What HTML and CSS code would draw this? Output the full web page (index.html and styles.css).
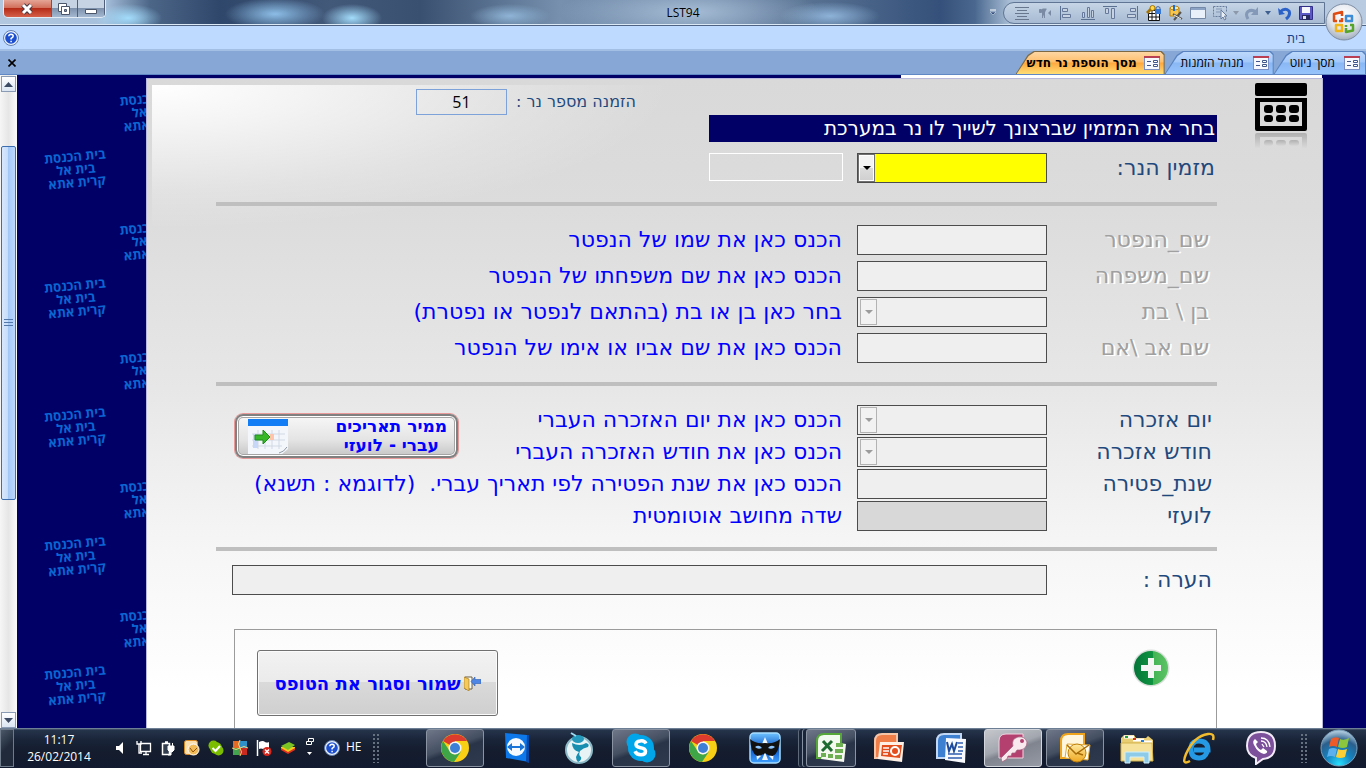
FILE: index.html
```html
<!DOCTYPE html>
<html lang="he" dir="rtl">
<head>
<meta charset="utf-8">
<title>LST94</title>
<link rel="stylesheet" href="styles.css">
</head>
<body>
<svg class="defs" width="0" height="0" aria-hidden="true">
  <defs>
    <linearGradient id="gold" x1="0" y1="0" x2="0" y2="1"><stop offset="0" stop-color="#ffe9a0"/><stop offset="1" stop-color="#eea820"/></linearGradient>
    <linearGradient id="blue" x1="0" y1="0" x2="0" y2="1"><stop offset="0" stop-color="#6fc4ff"/><stop offset=".5" stop-color="#0a52c4"/><stop offset="1" stop-color="#3ea0ff"/></linearGradient>
    <linearGradient id="green" x1="0" y1="0" x2="1" y2="0"><stop offset="0" stop-color="#05753a"/><stop offset=".55" stop-color="#0f9440"/><stop offset=".56" stop-color="#44b354"/><stop offset="1" stop-color="#5cc465"/></linearGradient>
    <radialGradient id="orb" cx=".5" cy=".95" r=".9"><stop offset="0" stop-color="#28e0ff"/><stop offset=".4" stop-color="#1583c0"/><stop offset=".75" stop-color="#2b5f8c"/><stop offset="1" stop-color="#a8c4d8"/></radialGradient>
    <radialGradient id="pearl" cx=".5" cy=".3" r=".7"><stop offset="0" stop-color="#fff"/><stop offset=".6" stop-color="#dfe4ec"/><stop offset="1" stop-color="#a3aebd"/></radialGradient>
    <linearGradient id="fade" x1="0" y1="0" x2="0" y2="1"><stop offset="0" stop-color="#b0b0b0"/><stop offset="1" stop-color="#d9d9d9"/></linearGradient>
    <symbol id="chrome" viewBox="0 0 28 28">
      <circle cx="14" cy="14" r="14" fill="#f9cf16"/>
      <path d="M14 14 2 7A14 14 0 0 1 26.100 7L14 7Z" fill="#dc3b2e"/>
      <path d="M2 7A14 14 0 0 0 13 28L20 17.500 14 20.500Q9.500 20 8 16Z" fill="#3fa648"/>
      <circle cx="14" cy="14" r="6.500" fill="#f4f6f8"/><circle cx="14" cy="14" r="5" fill="#3d7fd6"/>
    </symbol>
    <symbol id="formicon" viewBox="0 0 16 14">
      <rect x=".5" y=".5" width="15" height="13" fill="#f6f8fd" stroke="#7a8fc4"/><path d="M0 0h16v2H0z" fill="#b93f55"/>
      <path d="M3 5.500h4M3 9.500h4" stroke="#41568c"/><path d="M9.500 4.500h4v2h-4zM9.500 8.500h4v2h-4z" fill="#fff" stroke="#41568c"/>
    </symbol>
    <symbol id="help" viewBox="0 0 16 16">
      <circle cx="8" cy="8" r="7.500" fill="#e9f1fc" stroke="#6580ae"/><circle cx="8" cy="8" r="5.800" fill="#1c4fcf"/>
      <path d="M5.800 6.300Q6 4.200 8.100 4.200q2.100.1 2.100 1.900Q10.200 7.400 8.100 8.400v1M8.100 10.700v1.500" fill="none" stroke="#fff" stroke-width="1.500"/>
    </symbol>
  </defs>
</svg>

<header class="titlebar" dir="ltr">
  <div class="winbtns">
    <button class="win close" aria-label="סגור"><svg width="14" height="12" viewBox="0 0 14 12"><path d="M3 2l8 8M11 2l-8 8" stroke="#4a3940" stroke-width="5"/><path d="M3 2l8 8M11 2l-8 8" stroke="#fff" stroke-width="3"/></svg></button>
    <button class="win" aria-label="שחזר"><svg width="14" height="13" viewBox="0 0 14 13"><path d="M1.500 1.500h8v8h-8z" fill="#fff" stroke="#4c566a"/><path d="M4.500 4.500h8v8h-8z" fill="#fff" stroke="#4c566a"/><path d="M7.500 7.500h2v2h-2z" fill="#8d9db5" stroke="#4c566a"/></svg></button>
    <button class="win" aria-label="מזער"><svg width="14" height="12" viewBox="0 0 14 12"><path d="M1.500 6.500h11v4h-11z" fill="#fff" stroke="#4c566a"/></svg></button>
  </div>
  <h1 class="apptitle">LST94</h1>
  <div class="quick">
    <svg class="more" width="8" height="8" viewBox="0 0 8 8"><path d="M1 1h6" stroke="#fff"/><path d="M1 3h6L4 6z" fill="#35507c" stroke="#e6eef8" stroke-width=".5"/></svg>
    <div class="pill">
      <svg width="16" height="16" viewBox="0 0 16 16"><path d="M1 2.500h14M3 5.500h10M1 8.500h14M3 11.500h10M1 14.500h14" stroke="#68768e"/></svg>
      <svg width="16" height="16" viewBox="0 0 16 16"><path d="M8.500 4v9M6.500 13V4h4M3.500 4.500h2v3h-2z" stroke="#7a8aa3" fill="#7a8aa3"/><path d="M15 5v6l-3-3z" fill="#7a8aa3"/></svg>
      <svg width="16" height="16" viewBox="0 0 16 16"><path d="M2.500 1v14" stroke="#5b7191"/><path d="M4.500 3.500h5v3h-5zM4.500 9.500h8v3h-8z" fill="#c7d3e3" stroke="#66799a"/></svg>
      <svg width="16" height="16" viewBox="0 0 16 16"><path d="M1 14.500h14" stroke="#5b7191"/><path d="M2.500 7.500h2v5h-2zM7.500 2.500h2v10h-2zM11.500 5.500h2v7h-2z" fill="#c7d3e3" stroke="#66799a"/></svg>
      <svg width="16" height="16" viewBox="0 0 16 16"><path d="M1 1.500h14" stroke="#5b7191"/><path d="M3.500 3.500h3v5h-3zM9.500 3.500h3v10h-3z" fill="#c7d3e3" stroke="#66799a"/></svg>
      <svg width="16" height="16" viewBox="0 0 16 16"><path d="M13.500 1v14" stroke="#5b7191"/><path d="M6.500 3.500h5v3h-5zM3.500 9.500h8v3h-8z" fill="#c7d3e3" stroke="#66799a"/></svg>
      <svg width="16" height="16" viewBox="0 0 16 16"><path d="M2.500 5.500h11v10h-11z" fill="#fff" stroke="#111"/><path d="M2 8.500h12M2 12h12M6 5v10M10 5v10" stroke="#111"/><path d="M10 4V2.500q2-2 4 0V4" fill="none" stroke="#4466a0"/><path d="M9 4h6v5H9z" fill="#3778d4"/><path d="M1 8l5-5" stroke="#a37508" stroke-width="3"/><circle cx="6.500" cy="3" r="2.500" fill="#ffd94a" stroke="#a37508"/></svg>
      <svg width="16" height="16" viewBox="0 0 16 16"><path d="M2 3h9v8H2z" fill="#f6c650" stroke="#b98112"/><ellipse cx="6.500" cy="3" rx="4.500" ry="2" fill="#ffe99b" stroke="#b98112"/><path d="M6 0v6" stroke="#1e6ed0" stroke-width="2"/><path d="M5 9l9 5M13 7l-7 8" stroke="#555" stroke-width="2"/><path d="M6 10l7 4" stroke="#f0f0f0"/></svg>
      <svg width="16" height="16" viewBox="0 0 16 16"><path d="M.5 2.500h15v11H.5z" fill="#e9f0f9" stroke="#7488a7"/><path d="M1 3h14v2H1z" fill="#8ba2c5"/></svg>
      <svg width="16" height="16" viewBox="0 0 16 16"><path d="M1.500 1.500h13M1.500 1.500v10h7M14.500 1.500v5" fill="none" stroke="#687c9c" stroke-dasharray="2 1"/><path d="M4 4h6M4 7h4" stroke="#8397b4"/><path d="M9 5v9l2-2 1.500 3 1.500-1-1.500-3H15z" fill="#e9eef5" stroke="#687c9c"/></svg>
      <svg class="tiny" width="6" height="4" viewBox="0 0 6 4"><path d="M0 0h6L3 4z" fill="#8d99aa"/></svg>
      <svg width="16" height="16" viewBox="0 0 16 16"><path d="M4 14Q1 9 4 6.500 8 4 12 7" fill="none" stroke="#8499b7" stroke-width="3"/><path d="M14 2v8H7z" fill="#8499b7"/></svg>
      <svg class="tiny" width="6" height="4" viewBox="0 0 6 4"><path d="M0 0h6L3 4z" fill="#3f5f91"/></svg>
      <svg width="16" height="16" viewBox="0 0 16 16"><path d="M10 14Q15 10 13 6 9 2 4 7" fill="none" stroke="#2c62c8" stroke-width="3"/><path d="M2 3l1 7 6-1z" fill="#2c62c8"/></svg>
      <svg width="16" height="16" viewBox="0 0 16 16"><path d="M1.500 1.500h13v13h-13z" fill="#5c58c4" stroke="#302e85"/><path d="M4 2h8v6H4z" fill="#f5f7fc"/><path d="M4 10h8v5H4z" fill="#292a5e"/><path d="M5 11h3v3H5z" fill="#dfe4f0"/></svg>
    </div>
    <button class="office" aria-label="Office"><svg width="38" height="38" viewBox="0 0 38 38"><circle cx="19" cy="19" r="18" fill="url(#pearl)" stroke="#7d8da4"/><g fill="none" stroke-width="2.500" stroke-linejoin="round"><path d="M17 13V9l-8 2v7h3M17 15v3h-3" stroke="#df4b13"/><path d="M21 13h6v5h-6z" stroke="#3c8cd8"/><path d="M17 22h-6v6h6z" stroke="#f0b416"/><path d="M21 25v4l7-1.500V22h-3M21 22v2" stroke="#57a42a"/></g></svg></button>
  </div>
</header>

<nav class="ribbon"><a class="home" href="#">בית</a><button class="plain" aria-label="עזרה"><svg width="16" height="16"><use href="#help"/></svg></button></nav>

<nav class="tabs">
  <button class="tab first"><svg width="16" height="14"><use href="#formicon"/></svg><span>מסך ניווט</span></button>
  <button class="tab"><svg width="16" height="14"><use href="#formicon"/></svg><span>מנהל הזמנות</span></button>
  <button class="tab active"><svg width="16" height="14"><use href="#formicon"/></svg><span>מסך הוספת נר חדש</span></button>
  <button class="plain closetab" aria-label="סגור כרטיסיה"><svg width="8" height="8" viewBox="0 0 8 8"><path d="M.5.500l7 7M7.500.500l-7 7" stroke="#000" stroke-width="1.600"/></svg></button>
</nav>

<div class="workspace">
  <main class="panel">
    <div class="side">
      <svg width="54" height="68" viewBox="0 0 54 68"><rect x="1" width="52" height="13" rx="2"/><path d="M1 15h52v31q0 2-2 2H3q-2 0-2-2zM6 19v24h42V19z" fill-rule="evenodd"/><g><rect x="10" y="22" width="9" height="8" rx="3"/><rect x="22" y="22" width="10" height="8" rx="3"/><rect x="35" y="22" width="10" height="8" rx="3"/><rect x="10" y="32" width="9" height="7" rx="3"/><rect x="22" y="32" width="10" height="7" rx="3"/><rect x="35" y="32" width="10" height="7" rx="3"/></g><g fill="url(#fade)"><path d="M1 52q0-2 2-2h48q2 0 2 2v13h-5V54H6v11H1z"/><rect x="10" y="57" width="9" height="6" rx="3"/><rect x="22" y="57" width="10" height="6" rx="3"/><rect x="35" y="57" width="10" height="6" rx="3"/></g></svg>
    </div>
    <form class="form">
      <div class="order"><label for="num">הזמנה מספר נר :</label><input id="num" class="num" value="51"></div>
      <h2 class="banner">בחר את המזמין שברצונך לשייך לו נר במערכת</h2>
      <div class="grid owner">
        <label class="lbl" for="owner">מזמין הנר:</label>
        <div class="combo on"><select id="owner"><option></option></select><span class="arrow"></span></div>
        <input class="ghost" aria-label="שם המזמין">
      </div>
      <hr>
      <div class="grid person">
        <label class="lbl off" for="fn">שם_הנפטר</label><input id="fn"><span class="hint">הכנס כאן את שמו של הנפטר</span>
        <label class="lbl off" for="ln">שם_משפחה</label><input id="ln"><span class="hint">הכנס כאן את שם משפחתו של הנפטר</span>
        <label class="lbl off" for="sx">בן \ בת</label><div class="combo"><select id="sx" disabled><option></option></select><span class="arrow"></span></div><span class="hint">בחר כאן בן או בת (בהתאם לנפטר או נפטרת)</span>
        <label class="lbl off" for="pr">שם אב \אם</label><input id="pr"><span class="hint">הכנס כאן את שם אביו או אימו של הנפטר</span>
      </div>
      <hr>
      <div class="grid dates">
        <label class="lbl" for="dd">יום אזכרה</label><div class="combo"><select id="dd" disabled><option></option></select><span class="arrow"></span></div><span class="hint">הכנס כאן את יום האזכרה העברי</span>
        <button type="button" class="convert"><span>ממיר תאריכים<br>עברי - לועזי</span>
          <svg width="40" height="35" viewBox="0 0 40 35"><path d="M0 0h40v30l-6 5H0z" fill="#f3f7fc"/><path d="M0 0h40v7H0z" fill="#127df5"/><path d="M4 15h33M4 21h33M4 27h30M10 11v19M17 11v19M24 11v19M31 11v19" stroke="#d1d8e4"/><path d="M5 15h5v14H5z" fill="#c6d7f8"/><path d="M22 15h4v6h-4z" fill="#ffc5ac"/><path d="M7 16h8v-5l7 7-7 7v-4H7z" fill="#38b728" stroke="#208c1c"/><path d="M31 34q5-1 8-6" fill="none" stroke="#8f98a4"/></svg>
        </button>
        <label class="lbl" for="mm">חודש אזכרה</label><div class="combo"><select id="mm" disabled><option></option></select><span class="arrow"></span></div><span class="hint">הכנס כאן את חודש האזכרה העברי</span>
        <label class="lbl" for="yy">שנת_פטירה</label><input id="yy"><span class="hint span">הכנס כאן את שנת הפטירה לפי תאריך עברי.&nbsp; (לדוגמא : תשנא)</span>
        <label class="lbl" for="gg">לועזי</label><input id="gg" class="auto" readonly><span class="hint span">שדה מחושב אוטומטית</span>
      </div>
      <hr class="tight">
      <div class="note"><label class="lbl" for="nt">הערה :</label><input id="nt"></div>
      <div class="actions">
        <button type="button" class="plain" aria-label="הוסף"><svg width="38" height="38" viewBox="0 0 38 38"><circle cx="19" cy="19" r="18.500" fill="#d9dfdb"/><circle cx="19" cy="19" r="17" fill="url(#green)"/><path d="M16 9h6v7h7v6h-7v7h-6v-7H9v-6h7z" fill="#f5f5f5"/></svg></button>
        <button type="button" class="savebtn"><svg width="17" height="15" viewBox="0 0 17 15"><path d="M1 1h7v12H1z" fill="#fff" stroke="#6b5a3c"/><path d="M0 1l5 2v12l-5-3z" fill="#f5c95a" stroke="#a87b22" stroke-width=".7"/><path d="M7 5.500L11 1v2.500h6v4h-6V10z" fill="#4d86e4" stroke="#2d5cae" stroke-width=".6"/></svg><span>שמור וסגור את הטופס</span></button>
      </div>
    </form>
  </main>
  <aside class="wall" dir="ltr" aria-hidden="true">
    <div class="col low"><p>בית הכנסת<br>בית אל<br>קרית אתא</p><p>בית הכנסת<br>בית אל<br>קרית אתא</p><p>בית הכנסת<br>בית אל<br>קרית אתא</p><p>בית הכנסת<br>בית אל<br>קרית אתא</p><p>בית הכנסת<br>בית אל<br>קרית אתא</p></div>
    <div class="col"><p>בית הכנסת<br>בית אל<br>קרית אתא</p><p>בית הכנסת<br>בית אל<br>קרית אתא</p><p>בית הכנסת<br>בית אל<br>קרית אתא</p><p>בית הכנסת<br>בית אל<br>קרית אתא</p><p>בית הכנסת<br>בית אל<br>קרית אתא</p></div>
  </aside>
  <div class="scroll">
    <button class="sbtn" aria-label="למעלה"><svg width="9" height="5" viewBox="0 0 9 5"><path d="M0 5L4.500 0 9 5z" fill="#3d4a63"/></svg></button>
    <div class="thumb"><svg width="9" height="8" viewBox="0 0 9 8"><path d="M0 .5h9M0 3.500h9M0 6.500h9" stroke="#5578ab"/></svg></div>
    <button class="sbtn" aria-label="למטה"><svg width="9" height="5" viewBox="0 0 9 5"><path d="M0 0h9L4.500 5z" fill="#3d4a63"/></svg></button>
  </div>
</div>

<footer class="taskbar" dir="ltr">
  <button class="desk" aria-label="הצג שולחן עבודה"></button>
  <time class="clock">11:17<br>26/02/2014</time>
  <div class="tray">
    <svg viewBox="0 0 16 16"><path d="M4 6h3l4-4v12l-4-4H4z" fill="#fff"/></svg>
    <svg viewBox="0 0 16 16"><path d="M4.500 3.500h10v8h-10zM7 14.500h6M10 12v2" fill="#1c2536" stroke="#fff" stroke-width="1.300"/><path d="M1 1v3h4V1M3 4v9h3" fill="none" stroke="#fff" stroke-width="1.300"/></svg>
    <svg viewBox="0 0 16 16"><path d="M2.500 3.500h7v11h-7zM5 2h3" fill="#333e50" stroke="#fff" stroke-width="1.500"/><path d="M8 6h6v4l-2 2h-2l-2-2zM9.500 3v3M12.500 3v3M11 12v3H8" fill="#fff" stroke="#fff"/></svg>
    <svg viewBox="0 0 16 16"><rect x=".5" y=".5" width="13" height="14" rx="2" fill="#f9dfb0" stroke="#d98820"/><circle cx="9.500" cy="9.500" r="5.500" fill="#f3bb58" stroke="#fff"/><path d="M6 8l3 4 4-4" fill="none" stroke="#91530c"/></svg>
    <svg viewBox="0 0 16 16"><circle cx="5.500" cy="5.500" r="5" fill="#7bbd00"/><circle cx="10.500" cy="10.500" r="5" fill="#7bbd00"/><circle cx="8" cy="8" r="6" fill="#7bbd00"/><path d="M4.500 8l3 3 4.500-5" fill="none" stroke="#fff" stroke-width="2"/></svg>
    <svg viewBox="0 0 16 16"><path d="M1 1h7v7H1z" fill="#e46b25"/><path d="M8 1h7v7H8z" fill="#2f8fc7"/><path d="M1 8h7v7H1z" fill="#44a34e"/><path d="M8 8h7v7H8z" fill="#c92a20"/><path d="M8 0q-3 4 0 8 3 4 0 8M0 8q4 3 8 0 4-3 8 0" fill="none" stroke="#f4d476"/></svg>
    <svg viewBox="0 0 16 16"><path d="M1.500 0v16" stroke="#fff" stroke-width="1.500"/><path d="M3 2q4-2 6 0 2 1 4 0v7q-4 1-6 0-2-1-4 0z" fill="#fff"/><circle cx="11" cy="11.500" r="4.500" fill="#d8261c"/><path d="M9 9.500l4 4M13 9.500l-4 4" stroke="#fff" stroke-width="1.500"/></svg>
    <svg viewBox="0 0 16 16"><path d="M1 10l7 4 7-4v-2H1z" fill="#e0301e"/><path d="M1 8l7 4 7-4v-1H1z" fill="#f5c91d"/><path d="M1 6l8-4 6 3-7 5z" fill="#7bc424"/></svg>
    <svg class="restore" viewBox="0 0 12 22"><path d="M4.500 4V1.500h5v3H8M2.500 4.500h5v3h-5z" fill="none" stroke="#fff"/><path d="M3 15h5l-2.500 3z" fill="#fff"/></svg>
    <svg viewBox="0 0 16 16"><use href="#help"/></svg>
  </div>
  <span class="lang">HE</span>
  <span class="grip"></span>
  <div class="apps">
    <button class="app open" aria-label="Chrome"><svg width="28" height="28"><use href="#chrome"/></svg></button>
    <button class="app" aria-label="TeamViewer"><svg width="28" height="32" viewBox="0 0 28 32"><path d="M2 1l22 2 2 27L3 26z" fill="#0c78ea"/><path d="M24 3l2 0v28l-3-1z" fill="#0647a8"/><circle cx="13" cy="15" r="9" fill="#f6faff"/><path d="M4 15l5-4v3h8v-3l5 4-5 4v-3H9v3z" fill="#1873d8"/></svg></button>
    <button class="app" aria-label="Browser"><svg width="30" height="32" viewBox="0 0 30 32"><circle cx="15" cy="18" r="13" fill="#e8f3f5" stroke="#8dbac8" stroke-width="2"/><path d="M8 11q8 4 14 0 4 1 2 4-5 1-8 4-2 4 1 6 1 3-3 5-2-2-2-5 1-3 3-5-7-2-7-9z" fill="#178daf"/><ellipse cx="14" cy="7" rx="6" ry="4" fill="#2499bb"/><path d="M7 1l5 3" stroke="#9cdcf0" stroke-width="2"/></svg></button>
    <button class="app open" aria-label="Skype"><svg width="30" height="30" viewBox="0 0 30 30"><circle cx="9" cy="9" r="8.500" fill="#00a6e9"/><circle cx="21" cy="21" r="8.500" fill="#00a6e9"/><circle cx="15" cy="15" r="13" fill="#00a6e9"/><path d="M20 10.500Q18 7 14 8q-4 .5-4 3.500 0 2.500 4.500 3.200 5 .8 5 3.600 0 3.500-4.500 3.500-4.500 0-6-3.500" fill="none" stroke="#fff" stroke-width="3.500"/></svg></button>
    <button class="app" aria-label="Chrome"><svg width="28" height="28"><use href="#chrome"/></svg></button>
    <button class="app" aria-label="Mask"><svg width="32" height="32" viewBox="0 0 32 32"><rect x="1" y="1" width="30" height="30" rx="4" fill="url(#blue)" stroke="#a7dcff" stroke-width="1.500"/><path d="M16 5l3 7h-6zM16 20l3 8h-6zM7 20l1 8 4-4zM25 20l-1 8-4-4z" fill="#f2f7ff"/><path d="M1 7q5 5 15 4 10 1 15-4-1 14-7 17-5 0-8-3-3 3-8 3Q2 21 1 7z" fill="#111"/><path d="M6 15q4-3 7 1-4 2-7-1zM26 15q-4-3-7 1 4 2 7-1z" fill="#8ec7ff"/></svg></button>
    <button class="app open stack" aria-label="Excel"><svg width="32" height="30" viewBox="0 0 32 30"><path d="M2 25V8q0-7 7-7h17v24z" fill="#f3f9ee" stroke="#57a63a" stroke-width="2"/><path d="M12 8l19 3-2 18-23-3 3-10z" fill="#f5f8ef"/><path d="M21 10h7v4h-7zM20 16h8v4h-8zM20 22h7v4h-7zM13 21h5v4h-5zM6 20h5v4H6z" fill="#6daf52"/><path d="M8 8l9 10M17 8L7 18" stroke="#1d6b2e" stroke-width="3"/></svg></button>
    <button class="app" aria-label="PowerPoint"><svg width="32" height="30" viewBox="0 0 32 30"><path d="M2 25V8q0-7 7-7h15v24z" fill="#ef7e49" stroke="#f6c5a8" stroke-width="2"/><path d="M7 9l24 0-2 20-24-3z" fill="#fff0e6"/><path d="M9 12l20 0-2 13-19-2z" fill="#e44d1c"/><path d="M10 15h6M10 18h6M10 21h5" stroke="#fff" stroke-width="1.500"/><circle cx="22" cy="18" r="4" fill="none" stroke="#fff" stroke-width="2"/></svg></button>
    <button class="app" aria-label="Word"><svg width="32" height="30" viewBox="0 0 32 30"><path d="M2 25V8q0-7 7-7h17v24z" fill="#3d7fd0" stroke="#c2d8f4" stroke-width="2"/><path d="M11 5l20 1-1 24-20-3z" fill="#f8fafe"/><path d="M12 9l2 9 3-7 2 7 3-9" fill="none" stroke="#1e4a9c" stroke-width="2"/><path d="M23 10h5M23 14h5M23 18h5M13 21h14M13 25h14" stroke="#315eb0" stroke-width="1.500"/></svg></button>
    <button class="app open current" aria-label="Access"><svg width="32" height="30" viewBox="0 0 32 30"><path d="M2 25V8q0-7 7-7h17v24z" fill="#b3406f" stroke="#f0d4e0"/><path d="M16 13q-2-7 5-9 7-1 9 5 0 7-7 8l-3 0-2 3h-3l-1 3h-3l-1 3-5 3-1-4z" fill="#f9e9ef" stroke="#a0607c" stroke-width=".7"/><circle cx="25" cy="8" r="2" fill="#b3406f"/></svg></button>
    <button class="app open" aria-label="Outlook"><svg width="32" height="30" viewBox="0 0 32 30"><path d="M2 25V8q0-7 7-7h16v24z" fill="#fff6dd" stroke="#f0a41c" stroke-width="2"/><path d="M8 11l23 1-2 15-23-2z" fill="#fffdf4" stroke="#e3a932"/><circle cx="18" cy="20" r="9" fill="url(#gold)" stroke="#be7f0b"/><path d="M8 12l9 9 13-9M18 20l6 2" fill="none" stroke="#a76b07" stroke-width="1.500"/></svg></button>
    <button class="app" aria-label="Explorer"><svg width="34" height="32" viewBox="0 0 34 32"><path d="M1 6l3-3h10l2 3h10l2-2 5 4v20H1z" fill="#e8cd72"/><path d="M4 5h10M13 8h11M21 10h11" stroke="#fff" stroke-width="3"/><path d="M5 4h3v2H5z" fill="#20a52c"/><path d="M13 6h3v2h-3z" fill="#d2301f"/><path d="M21 8h3v2h-3z" fill="#2781dd"/><path d="M1 11h31l1 18H1z" fill="#f6e29a" stroke="#d4b34e"/><path d="M5 31V20h24v11h-5v-6H10v6z" fill="#8dcbe8" stroke="#d2effa"/></svg></button>
    <button class="app" aria-label="Internet Explorer"><svg width="34" height="32" viewBox="0 0 34 32"><path d="M25 20q-2 6-8 6-8 0-8-9 0-8 8-8 9 0 9 9H12" fill="none" stroke="#2699e5" stroke-width="5"/><path d="M8 29Q-1 34 4 22 12 4 26 2q7-1 5 6" fill="none" stroke="#f3bc2e" stroke-width="2.500"/></svg></button>
    <button class="app" aria-label="Viber"><svg width="32" height="34" viewBox="0 0 32 34"><path d="M16 1q14 0 14 14 0 12-12 13l-7 5v-6Q2 24 2 15 2 1 16 1z" fill="#7c509b" stroke="#f2eaf6" stroke-width="2"/><path d="M10 8q-3 2-1 6 4 8 10 9 4-1 3-3l-4-3-2 2q-4-2-5-6l2-2z" fill="#fff"/><path d="M16 10q5 0 6 6M16 7q8 0 9 9M17 13l2 3" fill="none" stroke="#fff" stroke-width="1.300"/></svg></button>
  </div>
  <span class="grip"></span>
  <button class="plain start" aria-label="התחל"><svg width="38" height="38" viewBox="0 0 38 38"><circle cx="19" cy="19" r="18" fill="url(#orb)" stroke="#7aa1bb"/><path d="M11 10q4-3 8-1l-2 9q-4-2-8 0z" fill="#ee5a28"/><path d="M20 10q4 2 9-1l-2 9q-4 2-9 0z" fill="#8cc63e"/><path d="M9 20q4-2 8 0l-2 8q-4-2-8 0z" fill="#5cb0ee"/><path d="M18 20q4 2 9 0l-2 8q-5 2-9 0z" fill="#fbcf35"/></svg></button>
</footer>
</body>
</html>
```
FILE: styles.css
```css
* { box-sizing: border-box; }
body {
  margin: 0;
  height: 100vh;
  display: flex;
  flex-direction: column;
  overflow: hidden;
  font-family: "Open Sans", "DejaVu Sans", sans-serif;
  font-size: 12px;
  color: #000;
}
button, input, select { font: inherit; margin: 0; padding: 0; border-radius: 0; }
svg { display: block; flex: none; }
.defs { position: absolute; }
.plain { border: 0; background: none; }

.titlebar {
  height: 26px;
  flex: none;
  display: grid;
  grid-template-columns: 1fr auto 1fr;
  align-items: start;
  border-bottom: 1px solid #4f6484;
  box-shadow: inset 0 -1px #dbe8f5;
  background:
    radial-gradient(ellipse 34px 14px at 128px 18px, #a3dcfb, transparent),
    radial-gradient(ellipse 50px 16px at 275px 14px, #8cbde6, transparent),
    radial-gradient(ellipse 30px 14px at 352px 18px, #a3dcfb, transparent),
    radial-gradient(ellipse 40px 12px at 510px 16px, #8fb4d6, transparent),
    radial-gradient(ellipse 130px 30px at 690px 12px, #a7bdd6, transparent),
    radial-gradient(ellipse 50px 14px at 830px 16px, #8eb3d8, transparent),
    linear-gradient(90deg, #b2c8e0 0, #a6bfdb 105px, #4c6688 150px, #2f476a 220px, #43597a 330px, #3a5070 420px, #7690ae 560px, #5a7494 800px, #35507a 940px, #4a688f 975px, #a9bed6 1010px, #b9cbe0 100%);
}
.winbtns { display: flex; margin-left: 3px; width: 103px; height: 18px; border: 1px solid #e1ebf5; border-top: 0; border-radius: 0 0 5px 5px; overflow: hidden; }
.win { width: 27px; display: grid; place-items: center; border: 0; border-right: 1px solid #50607a; background: linear-gradient(#c6d3e2 45%, #7e92ae 50%, #a5b8d0); }
.win.close { width: 48px; background: linear-gradient(#e5a596 0, #d2705c 45%, #b52c18 50%, #d5604a); }
.apptitle { margin: 0; padding-top: 5px; font-size: 12px; line-height: 16px; font-weight: 400; }
.quick { display: flex; justify-content: flex-end; align-items: flex-start; }
.more { margin: 9px 6px 0 0; }
.pill { display: flex; align-items: center; gap: 6px; height: 22px; margin-top: 2px; padding: 0 10px; border: 1px solid #5f7593; border-radius: 11px 0 0 11px; background: linear-gradient(#c6d5e6, #a6bad2); }
.tiny { margin: 0 -1px; }
.office { border: 0; background: none; width: 38px; height: 24px; margin: 3px 3px 0 0; position: relative; z-index: 2; }

.ribbon { height: 25px; flex: none; display: flex; justify-content: space-between; align-items: center; padding: 0 61px 0 3px; background: #bedbff; border-bottom: 2px solid #a3bfe3; }
.home { color: #15428b; text-decoration: none; font-size: 13px; line-height: 20px; }

.tabs { height: 24px; flex: none; display: flex; background: #87a8d6; border-bottom: 1px solid #5f88c4; }
.tab { position: relative; z-index: 0; display: flex; align-items: center; gap: 9px; border: 0; background: none; padding: 0 5px 0 16px; height: 23px; white-space: nowrap; }
.tab.first { padding-right: 6px; }
.tab::before, .tab::after { content: ""; position: absolute; z-index: -1; inset: 0; background: #5983c0; clip-path: polygon(0 100%, 12px 4px, 18px 0, calc(100% - 3px) 0, 100% 3px, 100% 100%); }
.tab::after { inset: 1px 1px 0; background: linear-gradient(#bdd8fb, #a3c8fa 45%, #8ab8f5 50%, #98c4fb); }
.tab.active { font-family: "DejaVu Sans", sans-serif; font-weight: 700; padding-left: 11px; gap: 7px; }
.tab.active::before { background: #7d6a45; }
.tab.active::after { background: linear-gradient(#fdd6a4, #ffbf6c 45%, #ffa83f 50%, #ffdd75); }
.closetab { margin-right: auto; padding: 0 8px; }

.workspace { flex: 1; min-height: 0; display: flex; overflow: hidden; padding-right: 43px; background: linear-gradient(#fff, #fff) right 44px top / 421px 3px no-repeat #000066; }
.panel {
  flex: 1;
  min-width: 0;
  display: flex;
  margin-top: 3px;
  overflow: hidden;
  border: solid #b9b9dc;
  border-width: 1px 1px 0;
  background:
    radial-gradient(ellipse at 0 0, #fff, rgba(255,255,255,.7) 20%, rgba(255,255,255,.2) 50%, rgba(255,255,255,0) 68%) 5px 6px / 540px 150px no-repeat,
    linear-gradient(#d9d9d9 0, #dcdcdc 130px, #e7e7e7 310px, #f6f6f6 470px, #fff 610px);
}
.side { width: 105px; flex: none; padding: 4px 14px 0 0; }
.form { flex: 1; min-width: 0; padding-left: 69px; display: flex; flex-direction: column; font-family: "DejaVu Sans", sans-serif; }
.order { display: flex; align-items: center; justify-content: flex-start; gap: 9px; margin: 10px 581px 0 0; color: #1f497d; font-size: 16px; line-height: 26px; white-space: nowrap; }
.num { width: 91px; height: 26px; text-align: center; font-family: "Open Sans", sans-serif; border: 1px solid #7da2d9; background: transparent; }
.banner { margin: 0; width: 508px; height: 27px; padding: 0 2px; background: #000066; color: #fff; font-size: 20px; line-height: 27px; font-weight: 400; white-space: nowrap; }
.grid { display: grid; grid-template-columns: 170px 190px 1fr; column-gap: 0; grid-auto-rows: 30px; line-height: 30px; }
.owner { margin-top: 11px; }
.person { row-gap: 6px; }
.dates { grid-template-columns: 170px 190px 1fr auto; row-gap: 2px; }
.lbl { color: #1f497d; padding-right: 5px; font-size: 22px; white-space: nowrap; }
.owner .lbl { padding-right: 2px; }
.lbl.off { color: #a0a0a0; padding-right: 8px; text-shadow: 2px 1px #fff; }
.hint { color: #00f; padding-right: 15px; font-size: 22px; white-space: nowrap; }
.hint.span { grid-column: 3 / 5; }
.form hr { width: 100%; height: 4px; border: 0; margin: 19px 0; background: #bfbfbf; flex: none; }
.form .tight { margin: 16px 0 14px; }
.grid input, .note input, .combo select { width: 100%; height: 30px; border: 1px solid #4c4c4c; background: #efefef; }
.grid .auto { background: #d8d8d8; }
.grid .ghost { width: 134px; height: 28px; margin-right: 14px; border-color: #fff; background: transparent; }
.combo { position: relative; }
.combo select { appearance: none; display: block; opacity: 1; }
.combo.on select { background: #ff0; }
.arrow { position: absolute; left: 3px; top: 2px; width: 17px; height: 26px; display: grid; place-items: center; border: 1px solid #b3b3b3; background: #f2f2f2; pointer-events: none; }
.arrow::before { content: ""; border: 4px solid transparent; border-top-color: #9c9c9c; border-bottom: 0; }
.on .arrow { left: 1px; top: 1px; height: 28px; border: 1px solid #707070; background: linear-gradient(#f4f4f4 50%, #dcdcdc 50%, #cfcfcf); box-shadow: inset 0 0 0 1px #fff; }
.on .arrow::before { border-top-color: #000; }
.convert { grid-column: 4; grid-row: 1 / 3; align-self: center; width: 223px; height: 44px; margin: 0 1px 0 19px; display: flex; align-items: center; justify-content: space-between; padding: 0 9px 0 11px; color: #00f; font-size: 17px; line-height: 19px; font-weight: 700; text-align: center; border: 2px solid #808080; border-radius: 8px; background: linear-gradient(#f7f7f7, #e4e4e4 60%, #c6c6c6); box-shadow: 0 0 0 1px #e89a9a, inset 0 0 0 1px #fff, inset 0 0 0 2px #a5a5a5; }
.dates .lbl { grid-column: 1; }
.note { display: grid; grid-template-columns: 170px 1fr; margin-left: 16px; line-height: 30px; }
.actions { flex: 1; display: flex; justify-content: space-between; align-items: flex-start; margin: 34px 0 0 18px; padding: 19px 46px 0 22px; border: 1px solid #9b9b9b; border-bottom: 0; }
.savebtn { width: 241px; height: 66px; margin-top: 1px; display: flex; align-items: center; justify-content: center; gap: 3px; border: 1px solid #707070; border-radius: 3px; background: linear-gradient(#f2f2f2, #ebebeb 48%, #dadada 48%, #cfcfcf); box-shadow: inset 0 0 0 1px #fbfbfb; color: #00f; font-size: 18px; font-weight: 700; white-space: nowrap; }

.wall { width: 129px; flex: none; display: flex; overflow: hidden; color: #0a66d2; font-size: 13px; line-height: 13px; font-weight: 700; text-align: center; }
.col { flex: none; width: 75px; padding-top: 17px; }
.low { padding-top: 75px; padding-left: 21px; width: 97px; }
.col p { margin: 0 0 87px; height: 42px; direction: rtl; white-space: nowrap; transform: rotate(-5deg); }

.scroll { width: 17px; flex: none; display: flex; flex-direction: column; align-items: center; padding: 1px 1px 0; background: linear-gradient(90deg, #f6f6f6, #e6e6e6 50%, #fafafa); }
.sbtn { width: 15px; height: 16px; flex: none; display: grid; place-items: center; border: 1px solid #8a9bb5; background: linear-gradient(#fff, #dbe5f3); }
.thumb { width: 15px; height: 354px; margin: 54px 0 auto; display: grid; place-items: center; border: 1px solid #3c6eb0; border-radius: 2px; background: linear-gradient(90deg, #d8e8fc, #c5ddfa 45%, #a4c8f6 50%, #bcd8fb); }

.taskbar { height: 40px; flex: none; display: flex; align-items: center; color: #fff; background: linear-gradient(#8497ab 0, #26344b 2px, #192439 12px, #141c2d 60%, #121a30); }
.desk { width: 14px; height: 38px; flex: none; border: 1px solid #6f7a8a; background: linear-gradient(135deg, #4b5868, #202a3b 50%); }
.clock { width: 90px; flex: none; text-align: center; font-size: 12px; line-height: 17px; }
.tray { display: flex; align-items: center; gap: 8px; margin-left: 8px; }
.tray svg { width: 16px; height: 16px; }
.tray .restore { height: 22px; width: 12px; }
.lang { margin: 0 10px 4px 6px; font-size: 12px; }
.grip { width: 8px; height: 30px; flex: none; background: radial-gradient(circle, #66717f 1px, transparent 1px) 0 0 / 4px 4px; }
.apps { display: flex; gap: 4px; margin: 0 10px 0 auto; }
.app { width: 58px; height: 38px; display: grid; place-items: center; border: 1px solid transparent; border-radius: 3px; background: none; }
.app.open { border-color: #8993a2; background: linear-gradient(160deg, #6d7788, #454f62 45%, #2a3448 55%, #303a4e); }
.app.current { border-color: #d3d6dc; background: linear-gradient(160deg, #c5c7cc, #a2a6ae 45%, #7f848f 55%, #959aa4); }
.app.stack { width: 50px; margin-left: 8px; box-shadow: -3px 0 #1b253a, -4px 0 #8590a0, -7px 0 #1b253a, -8px 0 #5e6979; }
.start { margin: 0 8px 0 12px; }
```
